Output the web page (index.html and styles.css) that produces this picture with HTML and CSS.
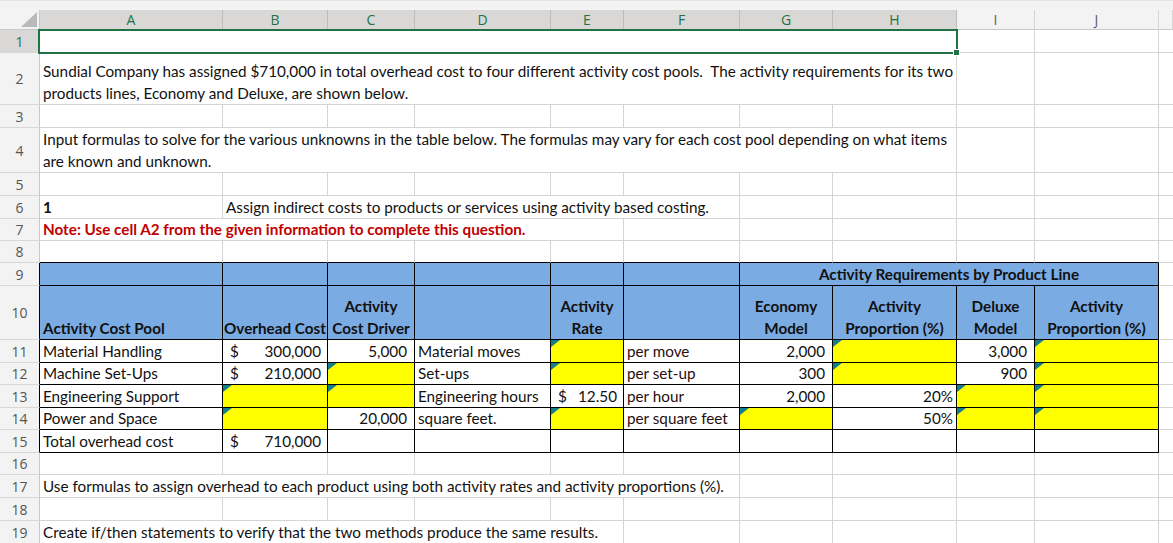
FILE: index.html
```html
<!DOCTYPE html>
<html>
<head>
<meta charset="utf-8">
<link rel="stylesheet" href="styles.css">
</head>
<body>
<div class="topband"></div>
<table class="sheet">
  <colgroup>
    <col class="w-rh"><col class="w-a"><col class="w-b"><col class="w-c"><col class="w-d"><col class="w-e"><col class="w-f"><col class="w-g"><col class="w-h"><col class="w-i"><col class="w-j"><col class="w-rest">
  </colgroup>
  <thead>
    <tr class="hdr">
      <th class="corner"><span class="corner-tri"></span></th>
      <th class="sel">A</th><th class="sel">B</th><th class="sel">C</th><th class="sel">D</th><th class="sel">E</th><th class="sel">F</th><th class="sel">G</th><th class="sel">H</th><th>I</th><th>J</th><th></th>
    </tr>
  </thead>
  <tbody>
    <tr class="h23">
      <th class="rh rsel">1</th>
      <td colspan="8" class="selbox"><span class="handle"></span></td><td></td><td></td><td class="rest"></td>
    </tr>
    <tr class="h52">
      <th class="rh">2</th>
      <td colspan="8" class="wrap">Sundial Company has assigned $710,000 in total overhead cost to four different activity cost pools.&nbsp; The activity requirements for its two<br>products lines, Economy and Deluxe, are shown below.</td><td></td><td></td><td class="rest"></td>
    </tr>
    <tr class="h23">
      <th class="rh">3</th>
      <td></td><td></td><td></td><td></td><td></td><td></td><td></td><td></td><td></td><td></td><td class="rest"></td>
    </tr>
    <tr class="h45">
      <th class="rh">4</th>
      <td colspan="8" class="wrap">Input formulas to solve for the various unknowns in the table below. The formulas may vary for each cost pool depending on what items<br>are known and unknown.</td><td></td><td></td><td class="rest"></td>
    </tr>
    <tr class="h23">
      <th class="rh">5</th>
      <td></td><td></td><td></td><td></td><td></td><td></td><td></td><td></td><td></td><td></td><td class="rest"></td>
    </tr>
    <tr class="h23">
      <th class="rh">6</th>
      <td class="strong">1</td><td colspan="5">Assign indirect costs to products or services using activity based costing.</td><td></td><td></td><td></td><td></td><td class="rest"></td>
    </tr>
    <tr class="h22">
      <th class="rh">7</th>
      <td colspan="5" class="note">Note: Use cell A2 from the given information to complete this question.</td><td></td><td></td><td></td><td></td><td></td><td class="rest"></td>
    </tr>
    <tr class="h22">
      <th class="rh">8</th>
      <td class="bb"></td><td class="bb"></td><td class="bb"></td><td class="bb"></td><td class="bb"></td><td class="bb"></td><td class="bb"></td><td class="bb"></td><td class="bb"></td><td class="bb"></td><td class="rest"></td>
    </tr>
    <tr class="h22">
      <th class="rh blk">9</th>
      <td class="bx hd"></td><td class="bx hd"></td><td class="bx hd"></td><td class="bx hd"></td><td class="bx hd"></td><td class="bx hd"></td><td colspan="4" class="bx hd ctr">Activity Requirements by Product Line</td><td class="rest"></td>
    </tr>
    <tr class="h54">
      <th class="rh blk">10</th>
      <td class="bx hd">Activity Cost Pool</td>
      <td class="bx hd ctr">Overhead Cost</td>
      <td class="bx hd ctr">Activity<br>Cost Driver</td>
      <td class="bx hd"></td>
      <td class="bx hd ctr">Activity<br>Rate</td>
      <td class="bx hd"></td>
      <td class="bx hd ctr">Economy<br>Model</td>
      <td class="bx hd ctr">Activity<br>Proportion (%)</td>
      <td class="bx hd ctr">Deluxe<br>Model</td>
      <td class="bx hd ctr">Activity<br>Proportion (%)</td>
      <td class="rest"></td>
    </tr>
    <tr class="h23">
      <th class="rh blk">11</th>
      <td class="bx">Material Handling</td>
      <td class="bx"><div class="acct"><span>$</span><span>300,000</span></div></td>
      <td class="bx num">5,000</td>
      <td class="bx">Material moves</td>
      <td class="bx y ind"></td>
      <td class="bx unit">per move</td>
      <td class="bx num">2,000</td>
      <td class="bx y ind"></td>
      <td class="bx num">3,000</td>
      <td class="bx y ind"></td>
      <td class="rest"></td>
    </tr>
    <tr class="h22">
      <th class="rh blk">12</th>
      <td class="bx">Machine Set-Ups</td>
      <td class="bx"><div class="acct"><span>$</span><span>210,000</span></div></td>
      <td class="bx y ind"></td>
      <td class="bx">Set-ups</td>
      <td class="bx y ind"></td>
      <td class="bx unit">per set-up</td>
      <td class="bx num">300</td>
      <td class="bx y ind"></td>
      <td class="bx num">900</td>
      <td class="bx y ind"></td>
      <td class="rest"></td>
    </tr>
    <tr class="h23">
      <th class="rh blk">13</th>
      <td class="bx">Engineering Support</td>
      <td class="bx y ind"></td>
      <td class="bx y ind"></td>
      <td class="bx">Engineering hours</td>
      <td class="bx"><div class="acct"><span>$</span><span>12.50</span></div></td>
      <td class="bx unit">per hour</td>
      <td class="bx num">2,000</td>
      <td class="bx pct">20%</td>
      <td class="bx y ind"></td>
      <td class="bx y ind"></td>
      <td class="rest"></td>
    </tr>
    <tr class="h22">
      <th class="rh blk">14</th>
      <td class="bx">Power and Space</td>
      <td class="bx y ind"></td>
      <td class="bx num">20,000</td>
      <td class="bx">square feet.</td>
      <td class="bx y ind"></td>
      <td class="bx unit">per square feet</td>
      <td class="bx y ind"></td>
      <td class="bx pct">50%</td>
      <td class="bx y ind"></td>
      <td class="bx y ind"></td>
      <td class="rest"></td>
    </tr>
    <tr class="h23">
      <th class="rh blk">15</th>
      <td class="bx">Total overhead cost</td>
      <td class="bx"><div class="acct"><span>$</span><span>710,000</span></div></td>
      <td class="bx"></td><td class="bx"></td><td class="bx"></td><td class="bx"></td><td class="bx"></td><td class="bx"></td><td class="bx"></td><td class="bx"></td>
      <td class="rest"></td>
    </tr>
    <tr class="h22">
      <th class="rh">16</th>
      <td></td><td></td><td></td><td></td><td></td><td></td><td></td><td></td><td></td><td></td><td class="rest"></td>
    </tr>
    <tr class="h23">
      <th class="rh">17</th>
      <td colspan="6">Use formulas to assign overhead to each product using both activity rates and activity proportions (%).</td><td></td><td></td><td></td><td></td><td class="rest"></td>
    </tr>
    <tr class="h23">
      <th class="rh">18</th>
      <td></td><td></td><td></td><td></td><td></td><td></td><td></td><td></td><td></td><td></td><td class="rest"></td>
    </tr>
    <tr class="h23">
      <th class="rh">19</th>
      <td colspan="5">Create if/then statements to verify that the two methods produce the same results.</td><td></td><td></td><td></td><td></td><td></td><td class="rest"></td>
    </tr>
  </tbody>
</table>
</body>
</html>
```

FILE: styles.css
```css
html, body {
  margin: 0;
  padding: 0;
  background: #ffffff;
  overflow: hidden;
}

.topband {
  height: 10px;
  background: #f3f3f3;
  border-top: 1px solid #e4e4e4;
  box-sizing: border-box;
}

.sheet {
  border-collapse: separate;
  border-spacing: 0;
  table-layout: fixed;
  width: 1173px;
  font-family: Lato, "Noto Sans", sans-serif;
  font-size: 15.25px;
  color: #111111;
}

.w-rh { width: 40px; }
.w-a { width: 183px; }
.w-b { width: 105px; }
.w-c { width: 87px; }
.w-d { width: 136px; }
.w-e { width: 73px; }
.w-f { width: 116px; }
.w-g { width: 93px; }
.w-h { width: 124px; }
.w-i { width: 78px; }
.w-j { width: 124px; }
.w-rest { width: 14px; }

.h22 { height: 22px; }
.h23 { height: 23px; }
.h45 { height: 45px; }
.h52 { height: 52px; }
.h54 { height: 54px; }

/* column header row */
.hdr { height: 20px; }
.hdr th {
  padding: 0;
  background: #f3f3f3;
  font-family: "Open Sans", "Noto Sans", sans-serif;
  font-size: 14px;
  font-weight: normal;
  color: #5c5c5c;
  text-align: center;
  vertical-align: middle;
  line-height: 18px;
  border-right: 1px solid #d5d5d5;
  border-bottom: 1px solid #c8c8c8;
}
.hdr th.sel {
  background: #d9d8d6;
  color: #217346;
  border-right-color: #bdbdbd;
}
.hdr th.corner {
  position: relative;
  border-right-color: #c8c8c8;
}
.corner-tri {
  position: absolute;
  right: 2px;
  bottom: 2px;
  width: 0;
  height: 0;
  border-left: 16px solid transparent;
  border-bottom: 15px solid #b9b9b9;
}

/* row headers */
.rh {
  padding: 0;
  background: #f3f3f3;
  font-family: "Open Sans", "Noto Sans", sans-serif;
  font-size: 14px;
  font-weight: normal;
  color: #555555;
  text-align: center;
  vertical-align: middle;
  border-right: 1px solid #c8c8c8;
  border-bottom: 1px solid #d8d8d8;
}
.rh.rsel {
  background: #d9d8d6;
  color: #217346;
}
.rh.blk {
  border-right-color: #000000;
}

/* cells */
.sheet td {
  padding: 0 3px;
  vertical-align: bottom;
  white-space: nowrap;
  overflow: hidden;
  line-height: 21px;
  position: relative;
  border-right: 1px solid #d4d4d4;
  border-bottom: 1px solid #d4d4d4;
}
.sheet td.rest {
  border-right: none;
}
.sheet td.wrap {
  line-height: 22px;
  padding-bottom: 0;
}

.selbox {
  overflow: visible !important;
}
.selbox::after {
  content: "";
  position: absolute;
  left: -2px;
  top: -1px;
  right: -2px;
  bottom: -2px;
  border: 2px solid #217346;
  z-index: 3;
  pointer-events: none;
}
.handle {
  position: absolute;
  right: -4px;
  bottom: -4px;
  width: 5px;
  height: 5px;
  background: #217346;
  border: 1px solid #ffffff;
  z-index: 4;
}

.strong { font-weight: bold; }
.note {
  color: #c00000;
  font-weight: bold;
}

.sheet td.bb { border-bottom-color: #000000; }
.sheet td.bx {
  border-right-color: #000000;
  border-bottom-color: #000000;
}
.sheet td.hd {
  background: #7aabe3;
  font-weight: bold;
  line-height: 22px;
}
.sheet td.ctr {
  text-align: center;
  padding: 0 1px;
}

.sheet td.y { background: #ffff00; }
.ind::before {
  content: "";
  position: absolute;
  left: 0;
  top: 0;
  width: 0;
  height: 0;
  border-top: 7px solid #12808a;
  border-right: 9px solid transparent;
}

.sheet td.num {
  text-align: right;
  padding-right: 7px;
}
.sheet td.pct {
  text-align: right;
  padding-right: 3px;
}
.acct {
  display: flex;
  justify-content: space-between;
  padding: 0 3px 0 4px;
}
.unit { color: #2a0d0d; }
```
